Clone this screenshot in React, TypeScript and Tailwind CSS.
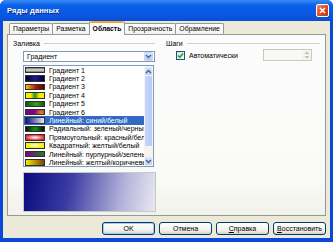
const rows = [
  { label: "Градиент 1", sw: "bg-[linear-gradient(to_bottom,#6e6e6e,#e4e4e4_50%,#6e6e6e)]" },
  { label: "Градиент 2", sw: "bg-[linear-gradient(to_right,#000030,#1c1c8a_50%,#000030)]" },
  { label: "Градиент 3", sw: "bg-[linear-gradient(to_right,#f0c800,#b01010_55%,#600000)]" },
  { label: "Градиент 4", sw: "bg-[linear-gradient(to_right,#f4f000,#f4f000_25%,#2a9a1a_50%,#f4f000_75%,#f4f000)]" },
  { label: "Градиент 5", sw: "bg-[linear-gradient(to_right,#0c5a10,#3f9a2a_60%,#0c5a10)]" },
  { label: "Градиент 6", sw: "bg-[radial-gradient(circle_at_85%_80%,#f08a20,#800080_45%)]" },
  { label: "Линейный: синий/белый", sw: "bg-[linear-gradient(to_right,#101088,#e8e8f8)]", sel: true },
  { label: "Радиальный: зеленый/черный", sw: "bg-[radial-gradient(circle,#1a9a1a,#002000_90%)]" },
  { label: "Прямоугольный: красный/белый", sw: "bg-[radial-gradient(ellipse,#ffffff,#e02020_80%)]" },
  { label: "Квадратный: желтый/белый", sw: "bg-[radial-gradient(ellipse,#ffffe0,#f0f000_70%)]" },
  { label: "Линейный: пурпурный/зеленый", sw: "bg-[linear-gradient(to_right,#800080,#208020)]" },
  { label: "Линейный: желтый/коричневый", sw: "bg-[linear-gradient(to_right,#f0f000,#804000)]" },
];

const Chevron = ({ up = false }: { up?: boolean }) => (
  <svg width="7" height="5" viewBox="0 0 7 5">
    <path d={up ? "M1 4 L3.5 1.5 L6 4" : "M1 1 L3.5 3.5 L6 1"} fill="none" stroke="#4d6185" strokeWidth="1.4" />
  </svg>
);

const XpButton = ({ children, def = false }: { children: React.ReactNode; def?: boolean }) => (
  <div
    className={`w-[53px] h-[13px] rounded-[3px] border border-[#003c74] flex items-center justify-center bg-[linear-gradient(#ffffff,#f0f0ea_70%,#d6d0c5)] ${def ? "shadow-[inset_0_0_0_1px_#a8c8f4]" : ""}`}
  >
    <span className="text-[7px] text-black leading-none">{children}</span>
  </div>
);

export default function App() {
  return (
    <div className="w-[333px] h-[242px] flex flex-col bg-[#0b47d8] rounded-t-[6px] overflow-hidden font-['Liberation_Sans',Arial,sans-serif]">
      {/* title bar */}
      <div className="h-[21px] flex items-center justify-between pl-[7px] pr-[4px] bg-[linear-gradient(#3a8df6,#0a60e8_25%,#0857e4_70%,#0a4dd6)]">
        <span className="text-white text-[7.5px] font-bold tracking-[0.1px] [text-shadow:1px_1px_0_#0a2a8a]">Ряды данных</span>
        <div className="w-[13px] h-[13px] rounded-[2px] border border-white bg-[linear-gradient(135deg,#f09070,#e0502a_45%,#c03010)] flex items-center justify-center">
          <svg width="7" height="7" viewBox="0 0 7 7">
            <path d="M1 1 L6 6 M6 1 L1 6" stroke="white" strokeWidth="1.6" />
          </svg>
        </div>
      </div>

      {/* body */}
      <div className="flex-1 mx-[3px] mb-[4px] bg-[#ece9d8] px-[4px] flex flex-col">
        {/* tabs */}
        <div className="h-[13px] flex items-end pl-[2px] relative z-10">
          {["Параметры", "Разметка"].map((t) => (
            <div key={t} className="h-[11px] px-[3px] border border-b-0 border-[#919b9c] rounded-t-[2px] bg-[linear-gradient(#ffffff,#f3f2ec)] flex items-center mr-[-1px]">
              <span className="text-[6.8px] leading-none text-black">{t}</span>
            </div>
          ))}
          <div className="h-[14px] mb-[-1px] px-[3px] border-x border-[#919b9c] rounded-t-[2px] bg-[#fcfcfe] flex flex-col">
            <div className="h-[2px] mx-[-3px] bg-[#f5a623] rounded-t-[2px]" />
            <div className="flex-1 flex items-center">
              <span className="text-[6.8px] leading-none font-bold text-black">Область</span>
            </div>
          </div>
          {["Прозрачность", "Обрамление"].map((t) => (
            <div key={t} className="h-[11px] px-[3px] border border-b-0 border-[#919b9c] rounded-t-[2px] bg-[linear-gradient(#ffffff,#f3f2ec)] flex items-center ml-[-1px]">
              <span className="text-[6.8px] leading-none text-black">{t}</span>
            </div>
          ))}
        </div>

        {/* panel */}
        <div className="h-[182px] border border-[#919b9c] bg-[linear-gradient(#fcfcfe,#fafaf7_80%,#f2f1ea)] flex pt-[4px] pl-[5px] pr-[5px] gap-[11px]">
          {/* left column */}
          <div className="w-[142px] flex flex-col">
            <div className="h-[9px] flex items-center gap-[4px]">
              <span className="text-[7px] leading-none text-black">Заливка</span>
              <div className="flex-1 h-px bg-[#d0d0bf]" />
            </div>
            <div className="ml-[10px] mt-[3px] w-[132px] flex flex-col">
              {/* combobox */}
              <div className="h-[11px] border border-[#7f9db9] bg-white flex items-center pl-[3px] pr-px">
                <span className="flex-1 text-[7px] leading-none text-black">Градиент</span>
                <div className="w-[9px] h-[9px] rounded-[1px] bg-[linear-gradient(#dce8fd,#b6ccf8)] border border-[#c4d6fb] flex items-center justify-center">
                  <Chevron />
                </div>
              </div>
              {/* list */}
              <div className="mt-[3px] h-[102px] w-[131px] border border-[#7f9db9] bg-white flex overflow-hidden">
                <div className="flex-1 flex flex-col overflow-hidden">
                  {rows.map((r) => (
                    <div key={r.label} className={`h-[8.4px] shrink-0 flex items-center gap-[4px] pl-px ${r.sel ? "bg-[#316ac5]" : ""}`}>
                      <div className={`w-[20px] h-[6.5px] shrink-0 border border-[#303030] ${r.sw}`} />
                      <span className={`text-[7px] leading-none whitespace-nowrap ${r.sel ? "text-white" : "text-black"}`}>{r.label}</span>
                    </div>
                  ))}
                </div>
                <div className="w-[9px] flex flex-col bg-[#f5f4ef] p-px gap-px">
                  <div className="h-[8px] rounded-[1px] bg-[linear-gradient(#dce8fd,#bcd0f9)] flex items-center justify-center">
                    <Chevron up />
                  </div>
                  <div className="h-[70px] rounded-[1px] bg-[linear-gradient(to_right,#c6d6fc,#b8cbf8)]" />
                  <div className="flex-1" />
                  <div className="h-[8px] rounded-[1px] bg-[linear-gradient(#dce8fd,#bcd0f9)] flex items-center justify-center">
                    <Chevron />
                  </div>
                </div>
              </div>
              {/* preview */}
              <div className="mt-[5px] h-[40px] w-[133px] border border-[#c8c8c8] bg-[linear-gradient(100deg,#0a0a7e,#3c3ca4_35%,#b4b4da_75%,#e8e8f2)]" />
            </div>
          </div>

          {/* right column */}
          <div className="flex-1 flex flex-col">
            <div className="h-[9px] flex items-center gap-[4px]">
              <span className="text-[7px] leading-none text-black">Шаги</span>
              <div className="flex-1 h-px bg-[#d0d0bf]" />
            </div>
            <div className="mt-[1px] ml-[10px] flex items-center">
              <div className="w-[9px] h-[9px] border border-[#1c5180] bg-[linear-gradient(135deg,#dcdcd7,#ffffff)] flex items-center justify-center">
                <svg width="7" height="7" viewBox="0 0 7 7">
                  <path d="M1 3.5 L2.8 5.3 L6 1.6" fill="none" stroke="#21a121" strokeWidth="1.5" />
                </svg>
              </div>
              <span className="ml-[4px] text-[7px] leading-none text-black">Автоматически</span>
              <div className="ml-auto mr-[8px] w-[49px] h-[12px] border border-[#c9c7ba] bg-[#f8f8f6] flex justify-end p-px">
                <div className="w-[7px] flex flex-col gap-px">
                  <div className="flex-1 bg-[#efefea] flex items-center justify-center">
                    <svg width="4" height="3" viewBox="0 0 4 3"><path d="M0 3 L2 0.5 L4 3Z" fill="#b8b8b0" /></svg>
                  </div>
                  <div className="flex-1 bg-[#efefea] flex items-center justify-center">
                    <svg width="4" height="3" viewBox="0 0 4 3"><path d="M0 0 L2 2.5 L4 0Z" fill="#b8b8b0" /></svg>
                  </div>
                </div>
              </div>
            </div>
          </div>
        </div>

        {/* buttons */}
        <div className="flex-1 flex items-start justify-end pt-[6px] gap-[4px]">
          <XpButton def>OK</XpButton>
          <XpButton>Отмена</XpButton>
          <XpButton>
            <span className="underline">С</span>правка
          </XpButton>
          <XpButton>
            <span className="underline">В</span>осстановить
          </XpButton>
        </div>
      </div>
    </div>
  );
}
